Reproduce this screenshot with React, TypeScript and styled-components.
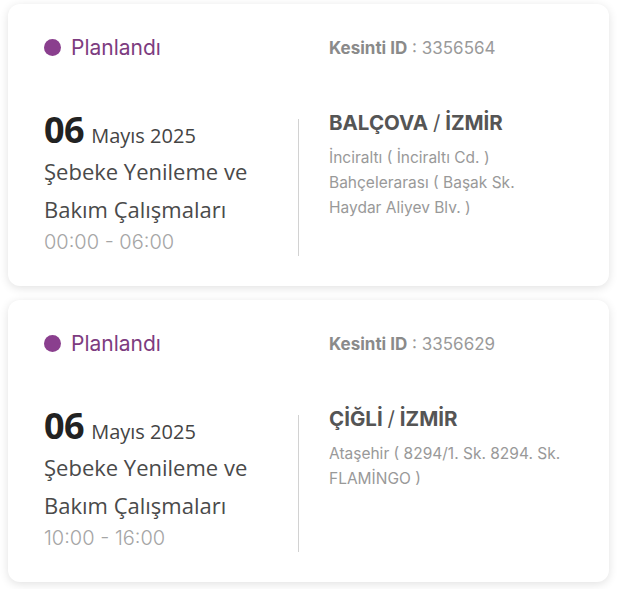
import React from 'react';
import styled, { createGlobalStyle } from 'styled-components';

type Outage = {
  id: string;
  status: string;
  day: string;
  monthYear: string;
  title: string;
  time: string;
  district: string;
  city: string;
  streets: string[];
};

const outages: Outage[] = [
  {
    id: '3356564',
    status: 'Planlandı',
    day: '06',
    monthYear: 'Mayıs 2025',
    title: 'Şebeke Yenileme ve Bakım Çalışmaları',
    time: '00:00 - 06:00',
    district: 'BALÇOVA',
    city: 'İZMİR',
    streets: ['İnciraltı ( İnciraltı Cd. )', 'Bahçelerarası ( Başak Sk. Haydar Aliyev Blv. )']
  },
  {
    id: '3356629',
    status: 'Planlandı',
    day: '06',
    monthYear: 'Mayıs 2025',
    title: 'Şebeke Yenileme ve Bakım Çalışmaları',
    time: '10:00 - 16:00',
    district: 'ÇİĞLİ',
    city: 'İZMİR',
    streets: ['Ataşehir ( 8294/1. Sk. 8294. Sk. FLAMİNGO )']
  }
];

const GlobalStyle = createGlobalStyle`
  body {
    margin: 0;
    background: #ffffff;
    font-family: 'Inter', 'Liberation Sans', sans-serif;
  }
`;

const List = styled.div`
  display: flex;
  flex-direction: column;
  gap: 14px;
  padding: 4px 11px 8px 8px;
`;

const Card = styled.div`
  background: #fff;
  border-radius: 12px;
  box-shadow: 0 2px 10px rgba(0, 0, 0, 0.12);
  padding: 31px 30px 30px 36px;
`;

const Row = styled.div`
  display: grid;
  grid-template-columns: 254px 1px 1fr;
`;

const Header = styled(Row)`
  align-items: center;
  height: 24px;
  margin-bottom: 50px;
`;

const Status = styled.div`
  display: flex;
  align-items: center;
  gap: 10px;
  color: #7d3c80;
  font-size: 21px;
`;

const Dot = styled.span`
  width: 17px;
  height: 17px;
  border-radius: 50%;
  background: #8a3f8e;
`;

const OutageId = styled.div`
  grid-column: 3;
  padding-left: 30px;
  font-size: 17px;
  color: #9a9a9a;

  b {
    color: #8a8a8a;
    font-weight: 700;
  }
`;

const Left = styled.div`
  display: flex;
  flex-direction: column;
  font-family: 'Open Sans', 'Noto Sans', sans-serif;
`;

const DateLine = styled.div`
  display: flex;
  align-items: baseline;
  gap: 7px;
  line-height: 42px;
`;

const Day = styled.span`
  font-size: 36px;
  font-weight: 700;
  color: #222;
  letter-spacing: -0.5px;
`;

const MonthYear = styled.span`
  font-size: 20px;
  color: #444;
`;

const Title = styled.div`
  font-size: 22px;
  line-height: 38px;
  color: #4a4a4a;
  width: 240px;
  margin-top: -5px;
`;

const Time = styled.div`
  font-family: 'Inter', sans-serif;
  font-weight: 300;
  font-size: 20px;
  line-height: 28px;
  color: #a5a5a5;
`;

const Divider = styled.div`
  background: #d2d2d2;
  margin: 10px 0 0;
`;

const Right = styled.div`
  padding-left: 30px;
`;

const District = styled.div`
  font-size: 20.5px;
  font-weight: 700;
  color: #555;
  line-height: 28px;
  margin-bottom: 8px;

  span {
    font-weight: 400;
  }
`;

const Street = styled.div`
  font-size: 15.5px;
  line-height: 25px;
  color: #999;
  max-width: 238px;
`;

const OutageCard: React.FC<{ item: Outage }> = ({ item }) => (
  <Card>
    <Header>
      <Status>
        <Dot />
        {item.status}
      </Status>
      <OutageId>
        <b>Kesinti ID</b> : {item.id}
      </OutageId>
    </Header>
    <Row>
      <Left>
        <DateLine>
          <Day>{item.day}</Day>
          <MonthYear>{item.monthYear}</MonthYear>
        </DateLine>
        <Title>{item.title}</Title>
        <Time>{item.time}</Time>
      </Left>
      <Divider />
      <Right>
        <District>
          {item.district} <span>/</span> {item.city}
        </District>
        {item.streets.map(s => (
          <Street key={s}>{s}</Street>
        ))}
      </Right>
    </Row>
  </Card>
);

export default function App() {
  return (
    <>
      <GlobalStyle />
      <List>
        {outages.map(o => (
          <OutageCard key={o.id} item={o} />
        ))}
      </List>
    </>
  );
}
